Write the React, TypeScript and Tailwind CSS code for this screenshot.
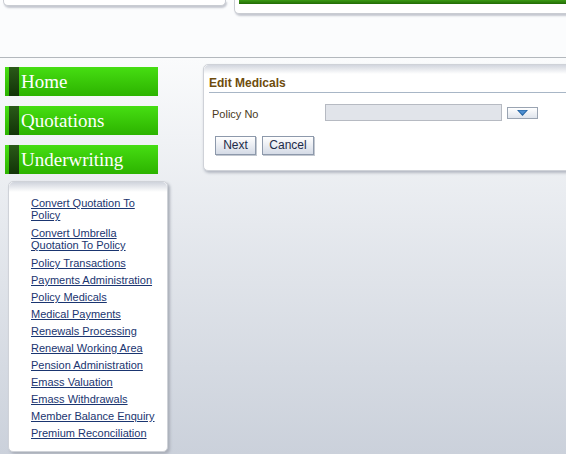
import React from 'react';

const navItems = ['Home', 'Quotations', 'Underwriting'];

const links: string[] = [
    'Convert Quotation To Policy',
    'Convert Umbrella Quotation To Policy',
    'Policy Transactions',
    'Payments Administration',
    'Policy Medicals',
    'Medical Payments',
    'Renewals Processing',
    'Renewal Working Area',
    'Pension Administration',
    'Emass Valuation',
    'Emass Withdrawals',
    'Member Balance Enquiry',
    'Premium Reconciliation',
];

function NavButton({ label }: { label: string }) {
    return (
        <div className="flex h-[29px] w-[153px] bg-gradient-to-b from-[#46de12] to-[#2cb300]">
            <div className="w-[4px]" />
            <div className="w-[10px] bg-gradient-to-b from-[#2a5a18] to-[#123408]" />
            <span className="pl-[2px] text-[19px] leading-[29px] text-white font-['Liberation_Serif',serif]">
                {label}
            </span>
        </div>
    );
}

function GreyButton({ label, width }: { label: string; width: string }) {
    return (
        <button
            className={`h-[19px] ${width} border border-[#8d99ab] bg-gradient-to-b from-[#ffffff] to-[#d5dbe6] text-[12px] leading-[17px] text-[#1d2b49] shadow-[1px_1px_0_#c3c8d0]`}
        >
            {label}
        </button>
    );
}

export default function App() {
    return (
        <div className="w-[566px] h-[454px] overflow-hidden font-['Liberation_Sans',Arial,sans-serif] bg-[#fbfcfd]">
            {/* top strip, cards cut off */}
            <div className="flex items-start h-[58px] border-b border-[#b3b8bd]">
                <div className="ml-[3px] h-[6px] w-[223px] rounded-b-[5px] border border-t-0 border-[#c9ccd2] bg-white shadow-[1px_2px_2px_#c5c8d0]" />
                <div className="ml-[8px] h-[14px] flex-1 -mr-4 rounded-bl-[5px] border border-t-0 border-[#c9ccd2] bg-white shadow-[1px_2px_2px_#c5c8d0]">
                    <div className="ml-[4px] h-[4px] bg-gradient-to-b from-[#3c9a14] to-[#226b06]" />
                </div>
            </div>

            <div className="flex h-[396px] bg-gradient-to-b from-[#fafbfc] to-[#cbd1db]">
                {/* left column */}
                <div className="w-[203px] shrink-0 pl-[5px] pt-[9px]">
                    <div className="flex flex-col gap-[10px]">
                        {navItems.map((n) => (
                            <NavButton key={n} label={n} />
                        ))}
                    </div>
                    <div className="ml-[3px] mt-[7px] w-[160px] h-[271px] rounded-[5px] border border-[#cfd2d8] bg-white shadow-[2px_2px_3px_#a9aeb8]">
                        <div className="h-[10px] rounded-t-[5px] bg-gradient-to-b from-[#cfd3dc] to-white" />
                        <div className="flex flex-col gap-[5px] pl-[22px] pt-[5px] pr-[8px]">
                            {links.map((l) => (
                                <a
                                    key={l}
                                    href="#"
                                    className="text-[11px] leading-[12px] text-[#1a3570] underline [&:nth-child(-n+2)]:pb-px"
                                >
                                    {l}
                                </a>
                            ))}
                        </div>
                    </div>
                </div>

                {/* edit panel */}
                <div className="flex-1 pt-[6px]">
                    <div className="-mr-4 h-[107px] rounded-[5px] border border-[#cfd2d8] bg-white shadow-[1px_2px_3px_#b3b8c2]">
                        <div className="h-[9px] rounded-t-[5px] bg-gradient-to-b from-[#d2d6de] to-white" />
                        <div className="mx-[5px] border-b border-[#a8b6c6] pb-[1px] pt-[2px] text-[12px] font-bold leading-[15px] text-[#6e4c0c]">
                            Edit Medicals
                        </div>
                        <div className="flex items-center pl-[8px] pt-[10px]">
                            <span className="w-[113px] pt-[3px] text-[11px] text-[#4a3a1c]">Policy No</span>
                            <div className="h-[17px] w-[177px] border border-[#b6bac2] bg-[#e1e4ea]" />
                            <div className="ml-[5px] flex h-[12px] w-[31px] items-center justify-center border border-[#9aa4b2] bg-gradient-to-b from-white to-[#dfe4ec]">
                                <svg width="11" height="6" viewBox="0 0 11 6">
                                    <path d="M0 0 L11 0 L5.5 6 Z" fill="#1f5f9e" />
                                    <path d="M1.5 0.6 L9.5 0.6 L5.5 4.6 Z" fill="#4d8ed0" />
                                </svg>
                            </div>
                        </div>
                        <div className="flex gap-[6px] pl-[11px] pt-[13px]">
                            <GreyButton label="Next" width="w-[41px]" />
                            <GreyButton label="Cancel" width="w-[52px]" />
                        </div>
                    </div>
                </div>
            </div>
        </div>
    );
}
